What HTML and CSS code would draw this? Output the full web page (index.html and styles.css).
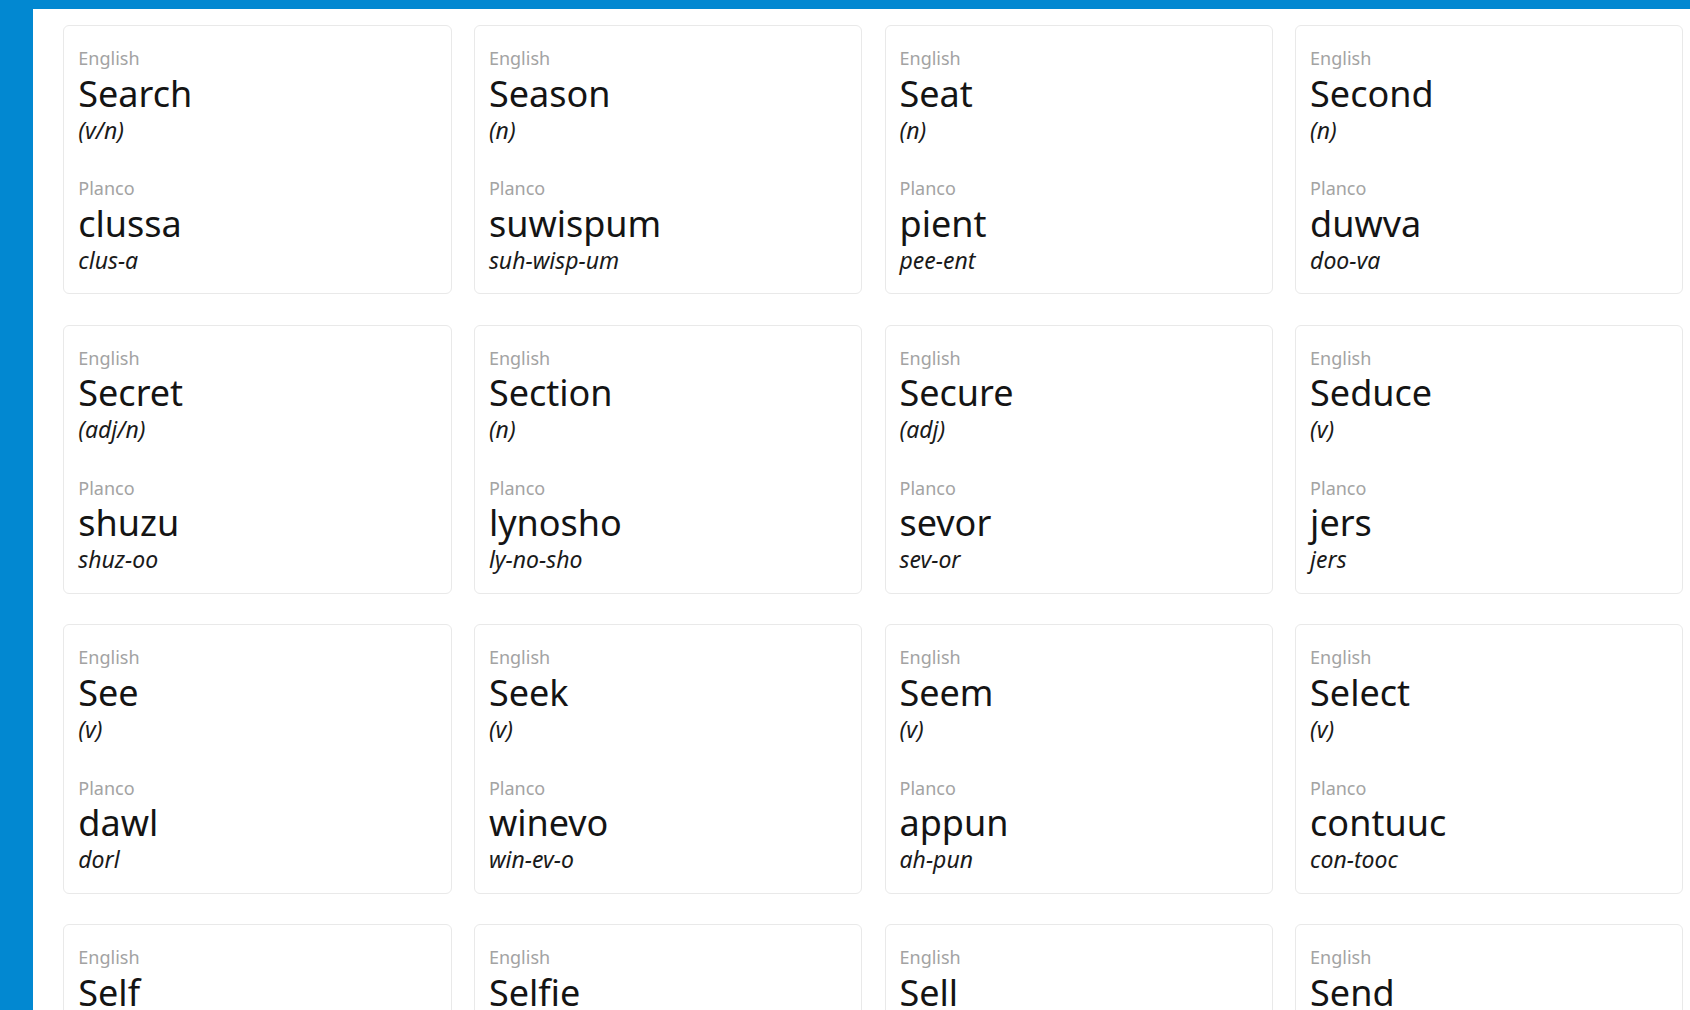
FILE: index.html
```html
<!DOCTYPE html>
<html lang="en">
<head>
<meta charset="utf-8">
<title>Planco Dictionary</title>
<link rel="stylesheet" href="styles.css">
</head>
<body>
<div class="app">
  <main class="content">
    <section class="grid">
      <article class="card">
        <div class="label">English</div><div class="word">Search</div><div class="note">(v/n)</div>
        <div class="label label-second">Planco</div><div class="word">clussa</div><div class="note">clus-a</div>
      </article>
      <article class="card">
        <div class="label">English</div><div class="word">Season</div><div class="note">(n)</div>
        <div class="label label-second">Planco</div><div class="word">suwispum</div><div class="note">suh-wisp-um</div>
      </article>
      <article class="card">
        <div class="label">English</div><div class="word">Seat</div><div class="note">(n)</div>
        <div class="label label-second">Planco</div><div class="word">pient</div><div class="note">pee-ent</div>
      </article>
      <article class="card">
        <div class="label">English</div><div class="word">Second</div><div class="note">(n)</div>
        <div class="label label-second">Planco</div><div class="word">duwva</div><div class="note">doo-va</div>
      </article>

      <article class="card">
        <div class="label">English</div><div class="word">Secret</div><div class="note">(adj/n)</div>
        <div class="label label-second">Planco</div><div class="word">shuzu</div><div class="note">shuz-oo</div>
      </article>
      <article class="card">
        <div class="label">English</div><div class="word">Section</div><div class="note">(n)</div>
        <div class="label label-second">Planco</div><div class="word">lynosho</div><div class="note">ly-no-sho</div>
      </article>
      <article class="card">
        <div class="label">English</div><div class="word">Secure</div><div class="note">(adj)</div>
        <div class="label label-second">Planco</div><div class="word">sevor</div><div class="note">sev-or</div>
      </article>
      <article class="card">
        <div class="label">English</div><div class="word">Seduce</div><div class="note">(v)</div>
        <div class="label label-second">Planco</div><div class="word">jers</div><div class="note">jers</div>
      </article>

      <article class="card">
        <div class="label">English</div><div class="word">See</div><div class="note">(v)</div>
        <div class="label label-second">Planco</div><div class="word">dawl</div><div class="note">dorl</div>
      </article>
      <article class="card">
        <div class="label">English</div><div class="word">Seek</div><div class="note">(v)</div>
        <div class="label label-second">Planco</div><div class="word">winevo</div><div class="note">win-ev-o</div>
      </article>
      <article class="card">
        <div class="label">English</div><div class="word">Seem</div><div class="note">(v)</div>
        <div class="label label-second">Planco</div><div class="word">appun</div><div class="note">ah-pun</div>
      </article>
      <article class="card">
        <div class="label">English</div><div class="word">Select</div><div class="note">(v)</div>
        <div class="label label-second">Planco</div><div class="word">contuuc</div><div class="note">con-tooc</div>
      </article>

      <article class="card">
        <div class="label">English</div><div class="word">Self</div><div class="note">(n)</div>
        <div class="label label-second">Planco</div><div class="word">sello</div><div class="note">sel-lo</div>
      </article>
      <article class="card">
        <div class="label">English</div><div class="word">Selfie</div><div class="note">(n)</div>
        <div class="label label-second">Planco</div><div class="word">selvoto</div><div class="note">sel-vo-to</div>
      </article>
      <article class="card">
        <div class="label">English</div><div class="word">Sell</div><div class="note">(v)</div>
        <div class="label label-second">Planco</div><div class="word">vendu</div><div class="note">ven-doo</div>
      </article>
      <article class="card">
        <div class="label">English</div><div class="word">Send</div><div class="note">(v)</div>
        <div class="label label-second">Planco</div><div class="word">mittu</div><div class="note">mit-oo</div>
      </article>
    </section>
  </main>
</div>
</body>
</html>
```

FILE: styles.css
```css
html, body {
  margin: 0;
  padding: 0;
}

html {
  overflow: hidden;
}

body {
  background: #0288d1;
  font-family: "Noto Sans", "Open Sans", "DejaVu Sans", sans-serif;
  color: #111111;
}

.app {
  padding: 9px 0 0 33px;
  min-height: 1010px;
  box-sizing: border-box;
}

.content {
  background: #ffffff;
  min-height: 1001px;
  padding: 16px 6.7px 40px 30.3px;
  box-sizing: border-box;
}

.grid {
  display: grid;
  grid-template-columns: repeat(4, 1fr);
  column-gap: 22.4px;
  row-gap: 30.4px;
}

.card {
  border: 1px solid #e9e9e9;
  border-radius: 6px;
  padding: 21px 14px 20.5px 14px;
  background: #ffffff;
}

.label {
  font-size: 18px;
  line-height: 22px;
  color: #a3a3a3;
}

.label-second {
  margin-top: 34.8px;
}

.word {
  font-size: 36px;
  line-height: 44px;
  margin-top: 2.5px;
  color: #141414;
}

.note {
  font-size: 23px;
  line-height: 26px;
  font-style: italic;
  margin-top: 1px;
  color: #1a1a1a;
}
```
